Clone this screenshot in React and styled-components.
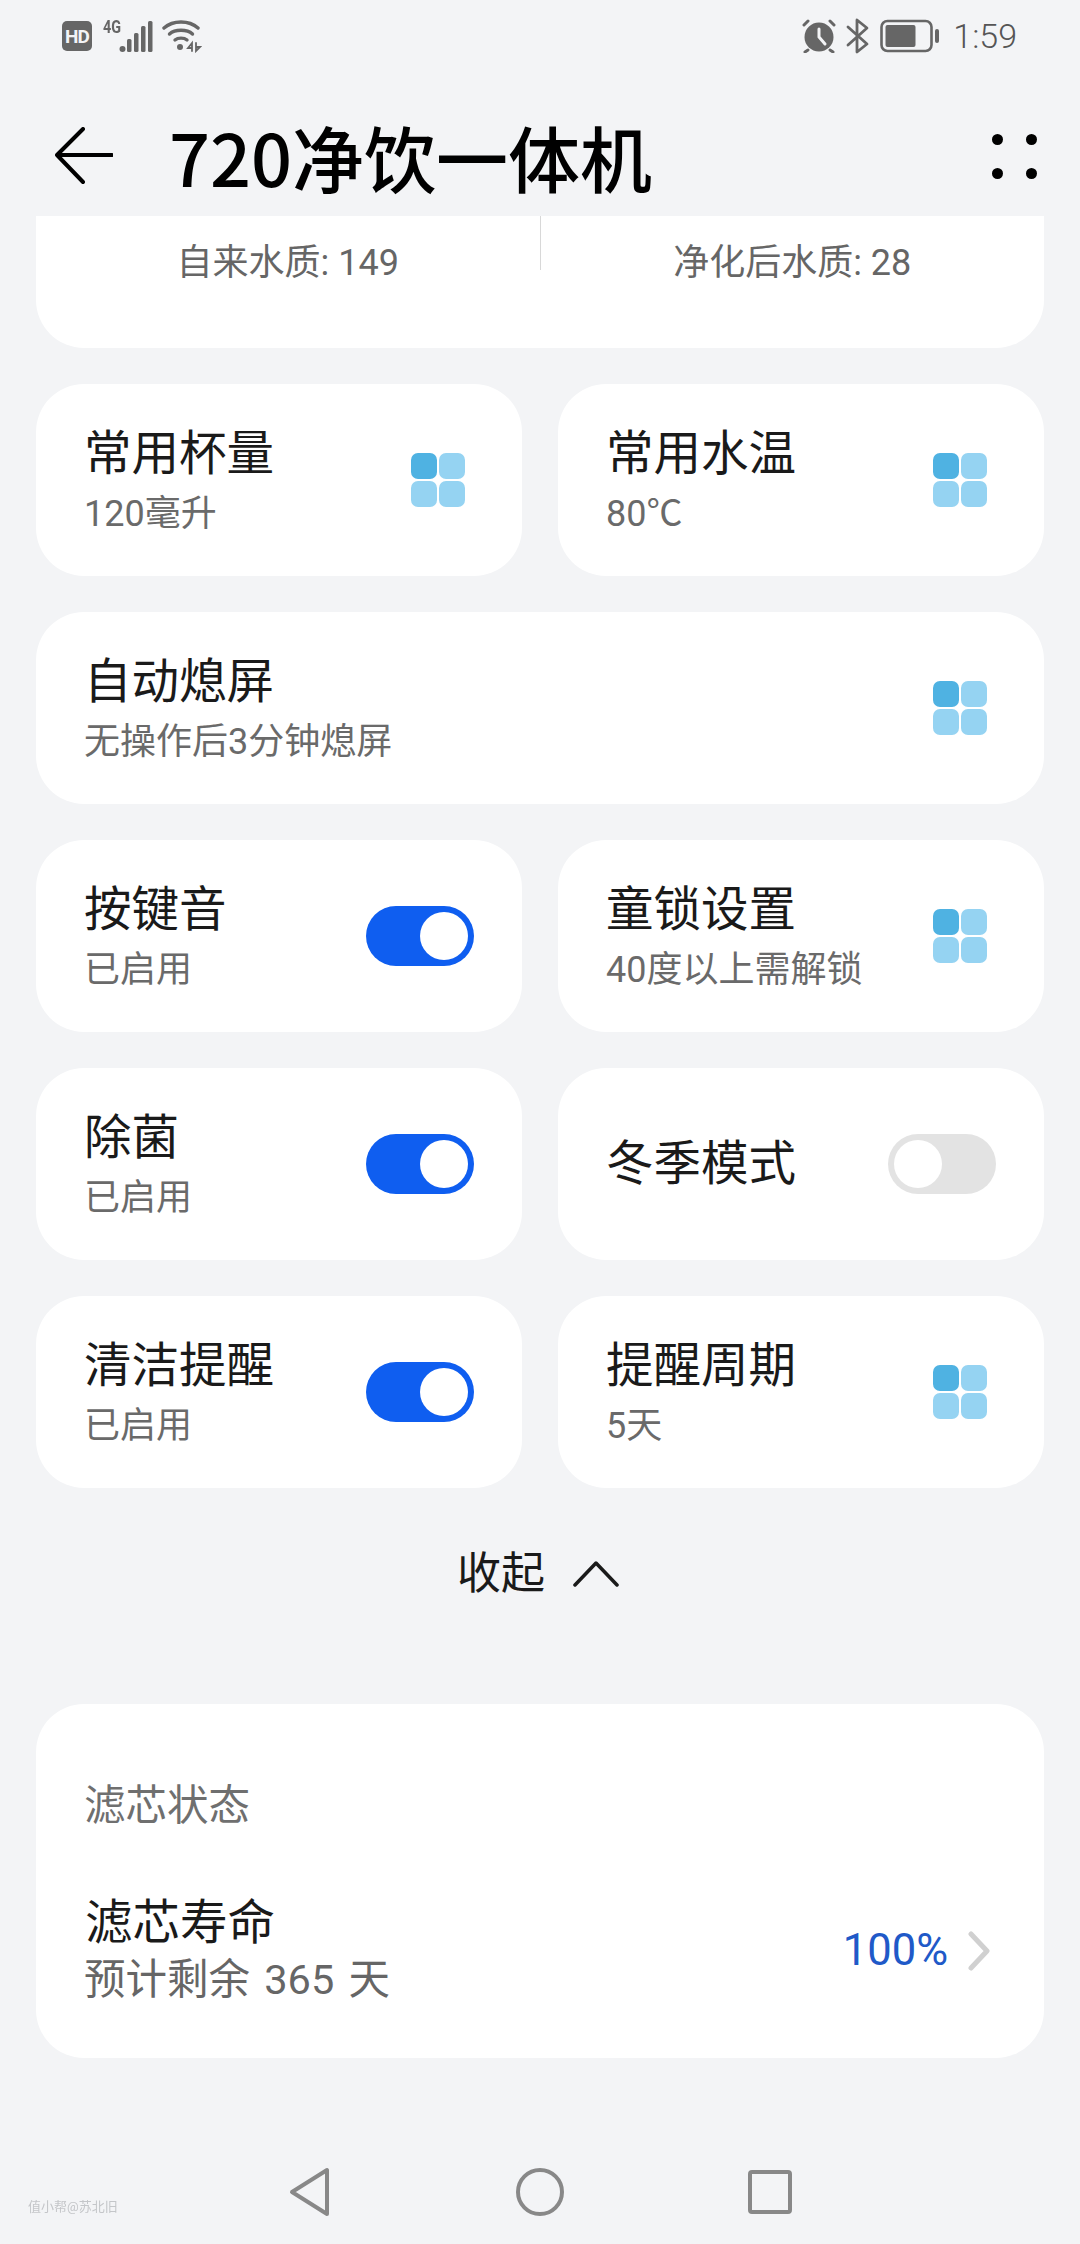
import styled, { createGlobalStyle } from "styled-components";

const GlobalStyle = createGlobalStyle`
  html, body {
    margin: 0;
    padding: 0;
    background: #f3f4f6;
  }
  * {
    box-sizing: border-box;
  }
`;

const FONT = `Roboto, "Noto Sans CJK SC", sans-serif`;

const Page = styled.div`
  width: 1080px;
  height: 2244px;
  display: flex;
  flex-direction: column;
  overflow: hidden;
  position: relative;
  background: #f3f4f6;
  font-family: ${FONT};
`;

const StatusBar = styled.div`
  height: 72px;
  padding: 0 63px 0 62px;
  display: flex;
  align-items: center;
  justify-content: space-between;
  color: #666;
`;

const StatusGroup = styled.div`
  display: flex;
  align-items: center;
  gap: ${(props) => props.$gap || 8}px;
`;

const HdBadge = styled.div`
  width: 30px;
  height: 30px;
  border-radius: 5px;
  background: #666;
  color: #f3f4f6;
  font-size: 19px;
  font-weight: 700;
  letter-spacing: -1px;
  display: flex;
  align-items: center;
  justify-content: center;
`;

const SignalBox = styled.div`
  position: relative;
  width: 52px;
  height: 34px;
`;

const FourG = styled.span`
  position: absolute;
  left: 2px;
  top: -1px;
  font-size: 18px;
  line-height: 18px;
  font-weight: 700;
  transform: scaleX(0.8);
  transform-origin: left;
`;

const Clock = styled.span`
  font-size: 34px;
  font-weight: 300;
  color: #555;
  margin-left: 3px;
`;

const Header = styled.header`
  height: 144px;
  padding: 24px 43px 0 55px;
  display: flex;
  align-items: center;
`;

const Title = styled.h1`
  margin: 0 0 0 56px;
  flex: 1;
  font-family: "Noto Sans CJK SC", sans-serif;
  font-size: 72px;
  font-weight: 500;
  line-height: 1;
  color: #000;
`;

const MenuDots = styled.div`
  display: grid;
  grid-template-columns: 11px 11px;
  gap: 23px;
`;

const Dot = styled.span`
  width: 11px;
  height: 11px;
  border-radius: 50%;
  background: #000;
`;

const QualityCard = styled.section`
  height: 132px;
  margin: 0 36px 36px;
  display: flex;
  background: #fff;
  border-radius: 0 0 48px 48px;
`;

const QualityCell = styled.div`
  flex: 1;
  height: 54px;
  padding-top: 29px;
  text-align: center;
  font-size: 36px;
  line-height: 36px;
  color: #666;
  & + & {
    border-left: 1px solid #d8d8d8;
  }
`;

const Grid = styled.div`
  padding: 0 36px;
  display: grid;
  grid-template-columns: 486px 486px;
  gap: 36px;
`;

const Card = styled.div`
  height: 192px;
  padding: 0 48px;
  grid-column: ${(props) => (props.$wide ? "span 2" : "auto")};
  display: flex;
  align-items: center;
  justify-content: space-between;
  background: #fff;
  border-radius: 48px;
`;

const CardText = styled.div`
  display: flex;
  flex-direction: column;
`;

const CardTitle = styled.div`
  font-size: 47.500px;
  line-height: 64px;
  color: #1a1a1a;
`;

const CardSub = styled.div`
  margin-top: 3px;
  font-size: 36px;
  line-height: 50px;
  color: #6a6a6a;
`;

const TileIcon = styled.div`
  width: 54px;
  height: 54px;
  margin-right: 9px;
  display: grid;
  grid-template-columns: 1fr 1fr;
  gap: 2px;
`;

const Tile = styled.span`
  border-radius: 7px;
  background: ${(props) => (props.$dark ? "#4fb2e2" : "#95d3f2")};
`;

const ToggleTrack = styled.div`
  width: 108px;
  height: 60px;
  padding: 6px;
  border-radius: 30px;
  display: flex;
  justify-content: ${(props) => (props.$on ? "flex-end" : "flex-start")};
  background: ${(props) => (props.$on ? "#0f5ef0" : "#e3e3e3")};
`;

const ToggleKnob = styled.span`
  width: 48px;
  height: 48px;
  border-radius: 50%;
  background: #fff;
`;

const Collapse = styled.div`
  height: 216px;
  padding: 55px 4px 0 0;
  display: flex;
  justify-content: center;
  align-items: flex-start;
  gap: 28px;
  font-size: 44px;
  line-height: 62px;
  color: #1a1a1a;
  svg {
    margin-top: 17px;
  }
`;

const FilterCard = styled.section`
  height: 354px;
  margin: 0 36px;
  padding: 71px 50px 0 49px;
  background: #fff;
  border-radius: 48px;
`;

const FilterHeading = styled.div`
  margin-left: -1px;
  font-size: 41.500px;
  line-height: 62px;
  color: #6f6f6f;
`;

const FilterRow = styled.div`
  margin-top: 54px;
  display: flex;
  align-items: center;
  justify-content: space-between;
`;

const FilterSub = styled.div`
  margin: 1px 0 0 -1px;
  font-size: 41.500px;
  line-height: 48px;
  word-spacing: 4px;
  color: #666;
`;

const FilterValue = styled.div`
  display: flex;
  align-items: center;
  gap: 20px;
  margin: 6px 4px 0 0;
  font-size: 43.500px;
  color: #2059c8;
`;

const NavBar = styled.nav`
  margin-top: auto;
  height: 104px;
  display: flex;
  align-items: flex-start;
  justify-content: center;
`;

const NavSlot = styled.div`
  width: 230px;
  height: 104px;
  display: flex;
  align-items: center;
  justify-content: center;
`;

const Watermark = styled.span`
  position: absolute;
  left: 28px;
  bottom: 28px;
  font-size: 13px;
  line-height: 18px;
  color: #c4c6c9;
  filter: blur(0.7px);
`;

const SettingIcon = () => (
  <TileIcon>
    <Tile $dark />
    <Tile />
    <Tile />
    <Tile />
  </TileIcon>
);

const Toggle = ({ on }) => (
  <ToggleTrack $on={on}>
    <ToggleKnob />
  </ToggleTrack>
);

const settings = [
  { title: "常用杯量", sub: "120毫升", kind: "tile" },
  { title: "常用水温", sub: "80℃", kind: "tile" },
  { title: "自动熄屏", sub: "无操作后3分钟熄屏", kind: "tile", wide: true },
  { title: "按键音", sub: "已启用", kind: "on" },
  { title: "童锁设置", sub: "40度以上需解锁", kind: "tile" },
  { title: "除菌", sub: "已启用", kind: "on" },
  { title: "冬季模式", kind: "off" },
  { title: "清洁提醒", sub: "已启用", kind: "on" },
  { title: "提醒周期", sub: "5天", kind: "tile" },
];

const App = () => (
  <Page>
    <GlobalStyle />
    <StatusBar>
      <StatusGroup $gap={9}>
        <HdBadge>HD</HdBadge>
        <SignalBox>
          <FourG>4G</FourG>
          <svg width="52" height="34" viewBox="0 0 52 34" fill="#666">
            <circle cx="21.500" cy="30" r="3" />
            <rect x="26" y="20" width="4.500" height="13" rx="1.500" />
            <rect x="33" y="14" width="4.500" height="19" rx="1.500" />
            <rect x="40" y="7" width="4.500" height="26" rx="1.500" />
            <rect x="47" y="2" width="4.500" height="31" rx="1.500" />
          </svg>
        </SignalBox>
        <svg width="40" height="34" viewBox="0 0 40 34" fill="none" stroke="#666" strokeWidth="3.400" strokeLinecap="round">
          <path d="M2 9 C11 1 27 1 36 9" />
          <path d="M7.500 15 C13 10 25 10 30.500 15" />
          <path d="M13 21 C16 18.500 22 18.500 25 21" />
          <circle cx="18" cy="28" r="3" fill="#666" stroke="none" />
          <path d="M30 32 V24 L26 29 H30 M34 24 V32 L38 28 H34" strokeWidth="1.800" />
        </svg>
      </StatusGroup>
      <StatusGroup $gap={10}>
        <svg width="34" height="34" viewBox="0 0 34 34" fill="none" stroke="#666" strokeLinecap="round">
          <circle cx="17" cy="18" r="14.500" fill="#666" stroke="none" />
          <path d="M17 10 V18 L23 25" stroke="#f3f4f6" strokeWidth="3" />
          <path d="M2 6 L6 2 M32 6 L28 2 M6 31 L3 33 M28 31 L31 33" strokeWidth="3" />
        </svg>
        <svg width="24" height="36" viewBox="0 0 24 36" fill="none" stroke="#666" strokeWidth="2.800" strokeLinejoin="round" strokeLinecap="round">
          <path d="M2 9 L21 26 L11 34 V2 L21 10 L2 27" />
        </svg>
        <svg width="60" height="34" viewBox="0 0 60 34" fill="none">
          <rect x="1.500" y="2" width="50" height="30" rx="6" stroke="#666" strokeWidth="2.600" />
          <rect x="5.500" y="6" width="30" height="22" rx="2" fill="#666" />
          <rect x="55" y="10" width="4" height="14" rx="2" fill="#666" />
        </svg>
        <Clock>1:59</Clock>
      </StatusGroup>
    </StatusBar>

    <Header>
      <svg width="58" height="58" viewBox="0 0 58 58" fill="none" stroke="#000" strokeWidth="4" strokeLinecap="round" strokeLinejoin="round">
        <path d="M28 2 L2 28 L28 55 M2 28 H57" />
      </svg>
      <Title>720净饮一体机</Title>
      <MenuDots>
        <Dot />
        <Dot />
        <Dot />
        <Dot />
      </MenuDots>
    </Header>

    <QualityCard>
      <QualityCell>自来水质: 149</QualityCell>
      <QualityCell>净化后水质: 28</QualityCell>
    </QualityCard>

    <Grid>
      {settings.map((item) => (
        <Card key={item.title} $wide={item.wide}>
          <CardText>
            <CardTitle>{item.title}</CardTitle>
            {item.sub && <CardSub>{item.sub}</CardSub>}
          </CardText>
          {item.kind === "tile" ? <SettingIcon /> : <Toggle on={item.kind === "on"} />}
        </Card>
      ))}
    </Grid>

    <Collapse>
      收起
      <svg width="46" height="27" viewBox="0 0 46 27" fill="none" stroke="#1a1a1a" strokeWidth="3.500" strokeLinecap="round" strokeLinejoin="round">
        <path d="M2 25 L23 3 L44 25" />
      </svg>
    </Collapse>

    <FilterCard>
      <FilterHeading>滤芯状态</FilterHeading>
      <FilterRow>
        <CardText>
          <CardTitle>滤芯寿命</CardTitle>
          <FilterSub>预计剩余 365 天</FilterSub>
        </CardText>
        <FilterValue>
          100%
          <svg width="22" height="40" viewBox="0 0 22 40" fill="none" stroke="#d0d0d0" strokeWidth="5" strokeLinecap="round" strokeLinejoin="round">
            <path d="M3 3 L19 20 L3 37" />
          </svg>
        </FilterValue>
      </FilterRow>
    </FilterCard>

    <NavBar>
      <NavSlot>
        <svg width="42" height="50" viewBox="0 0 42 50" fill="none" stroke="#888" strokeWidth="4" strokeLinejoin="round">
          <path d="M38 3 V47 L3 25 Z" />
        </svg>
      </NavSlot>
      <NavSlot>
        <svg width="48" height="48" viewBox="0 0 48 48" fill="none" stroke="#888" strokeWidth="4">
          <circle cx="24" cy="24" r="22" />
        </svg>
      </NavSlot>
      <NavSlot>
        <svg width="44" height="44" viewBox="0 0 44 44" fill="none" stroke="#888" strokeWidth="4" strokeLinejoin="round">
          <rect x="2" y="2" width="40" height="40" rx="2" />
        </svg>
      </NavSlot>
    </NavBar>
    <Watermark>值小帮@苏北旧</Watermark>
  </Page>
);

export default App;
